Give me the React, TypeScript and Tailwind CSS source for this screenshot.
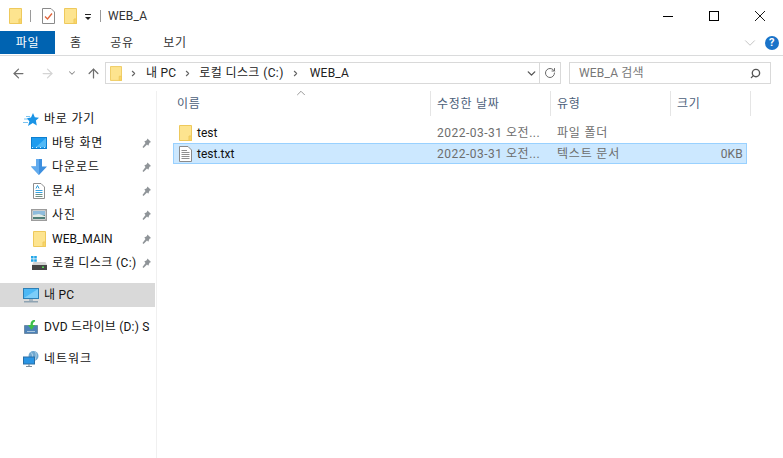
import { ChevronDown, ChevronUp, RotateCw, Search, ArrowLeft, ArrowRight, ArrowUp } from 'lucide-react'

function Folder({ w = 13, h = 16 }: { w?: number; h?: number }) {
  return (
    <svg width={w} height={h} viewBox="0 0 13 16" className="shrink-0">
      <path d="M0.5 0.5H12.5V15.5H0.5Z" fill="#fde48f" stroke="#eec95c" />
      <path d="M10 11H12.5V15.5H10Z" fill="#fbd667" stroke="#eec95c" />
    </svg>
  )
}

function ChecklistDoc() {
  return (
    <svg width="13" height="16" viewBox="0 0 13 16" className="shrink-0">
      <path d="M0.5 0.5H9L12.5 4V15.5H0.5Z" fill="#fff" stroke="#8a8a8a" />
      <path d="M3 8.5L5.5 11L10 5.5" fill="none" stroke="#e0633a" strokeWidth="1.3" />
    </svg>
  )
}

function TextDoc() {
  return (
    <svg width="13" height="16" viewBox="0 0 13 16" className="shrink-0">
      <path d="M0.5 0.5H9L12.5 4V15.5H0.5Z" fill="#fff" stroke="#8a8a8a" />
      <path d="M2.5 4.5H8M2.5 6.5H10.5M2.5 8.5H10.5M2.5 10.5H10.5M2.5 12.5H10.5" stroke="#8f8f8f" />
    </svg>
  )
}

function QuickStar() {
  return (
    <svg width="16" height="13" viewBox="0 0 16 13" className="shrink-0">
      <path d="M10 0L11.8 4.2L16 4.7L12.9 7.6L13.8 12.4L9.8 10L5 13L6.4 8.3L3.6 5.2L8 4.4Z" fill="#1a94e6" />
      <path d="M1 6H5M3 3.5H7M0 9.5H5" stroke="#7cc3f0" />
    </svg>
  )
}

function Desktop() {
  return (
    <svg width="16" height="12" viewBox="0 0 16 12" className="shrink-0">
      <rect x="0.5" y="0.5" width="15" height="11" fill="#1e9cef" stroke="#0d7fd0" />
      <path d="M5 10L15 1V10Z" fill="#52b9f6" />
      <path d="M1 10.5H15" stroke="#d4eefc" strokeDasharray="1 3" />
    </svg>
  )
}

function Download() {
  return (
    <svg width="16" height="16" viewBox="0 0 16 16" className="shrink-0">
      <path d="M5 0H11V7.5H16L8 16L0 7.5H5Z" fill="#3d8fdf" />
      <path d="M5 0H8V16L0 7.5H5Z" fill="#62abee" />
    </svg>
  )
}

function Documents() {
  return (
    <svg width="12" height="16" viewBox="0 0 12 16" className="shrink-0">
      <path d="M0.5 0.5H8L11.5 4V15.5H0.5Z" fill="#fff" stroke="#8f8f8f" />
      <path d="M3 5.5L4.5 2.5L6 5.5" fill="none" stroke="#2d9ad8" />
      <path d="M2.5 7.5H9.5M2.5 9.5H9.5" stroke="#35a3e0" />
      <path d="M2.5 11.5H9.5M2.5 13.5H9.5" stroke="#6f8f84" />
    </svg>
  )
}

function Pictures() {
  return (
    <svg width="16" height="12" viewBox="0 0 16 12" className="shrink-0">
      <rect x="0.75" y="0.75" width="14.5" height="10.5" fill="#fff" stroke="#9c9c9c" strokeWidth="1.5" />
      <rect x="2" y="2" width="12" height="4" fill="#8fbcdc" />
      <rect x="2" y="6" width="12" height="4" fill="#4f7f78" />
      <path d="M2 6L8 5L14 7V8H2Z" fill="#e2ebe6" />
    </svg>
  )
}

function LocalDisk() {
  return (
    <svg width="16" height="14" viewBox="0 0 16 14" className="shrink-0">
      <path d="M0 0H2.6V2.6H0ZM3.2 0H5.8V2.6H3.2ZM0 3.2H2.6V5.8H0ZM3.2 3.2H5.8V5.8H3.2Z" fill="#23a6e8" />
      <path d="M2.5 6H14.5L16 9H1Z" fill="#d3d3d3" />
      <rect x="1" y="9" width="15" height="5" fill="#444" />
      <rect x="11" y="10.5" width="2" height="1.5" fill="#57d957" />
    </svg>
  )
}

function Computer() {
  return (
    <svg width="16" height="15" viewBox="0 0 16 15" className="shrink-0">
      <rect x="0.5" y="0.5" width="15" height="10" fill="#4db8f5" stroke="#2d7fb5" />
      <path d="M1 10L15 1V10Z" fill="#7ccdf9" />
      <rect x="6" y="11" width="4" height="2" fill="#a5b5c1" />
      <rect x="1" y="13" width="14" height="1.5" fill="#8fa3b2" />
    </svg>
  )
}

function DvdDrive() {
  return (
    <svg width="14" height="14" viewBox="0 0 14 14" className="shrink-0">
      <path d="M0.5 5.5H13.5V13.5H0.5Z" fill="#4d82b8" stroke="#6f8ca6" />
      <path d="M3 11.5H11" stroke="#a9c7de" />
      <path d="M11 0C7.5 0 6.5 2 6.5 5H4L7.5 10L11 5H8.8C8.8 3 9.5 2 11 1.5Z" fill="#3cbf48" />
    </svg>
  )
}

function Network() {
  return (
    <svg width="16" height="16" viewBox="0 0 16 16" className="shrink-0">
      <circle cx="10.5" cy="5" r="5" fill="#6fa8d0" />
      <path d="M8 1.5C10 3 10 6 8.5 9M12 0.5C14 3 13 6 12 9" fill="none" stroke="#d7e8f4" strokeWidth="0.7" />
      <rect x="0.5" y="6" width="11" height="7" fill="#2a95e4" stroke="#2a6ea5" />
      <path d="M3 15.5H9M6 13V15" stroke="#7e8e9a" strokeWidth="1.2" />
    </svg>
  )
}

function Pin() {
  return (
    <svg width="11" height="11" viewBox="0 0 10 11" className="shrink-0">
      <path d="M6 0.5L9.5 4L8 4.8L6.8 7.8L5.5 6.5L2 10L1 9L4 5L2.8 3.5L5.2 2.2Z" fill="#8f9498" />
    </svg>
  )
}

function NavItem({ icon, label, pinned, active, indent, track = 'tracking-[0.8px]' }: { icon: React.ReactNode; label: string; pinned?: boolean; active?: boolean; indent?: boolean; track?: string }) {
  return (
    <div className={`flex h-6 items-center overflow-hidden whitespace-nowrap ${active ? 'bg-[#d9d9d9]' : ''} ${indent ? 'pl-[31px]' : 'pl-[23px]'}`}>
      <div className="mr-[5px] flex w-[16px] shrink-0 justify-center">{icon}</div>
      <span className={`min-w-0 flex-1 overflow-hidden text-[#111] ${track}`}>{label}</span>
      {pinned && (
        <div className="mx-[3px] shrink-0">
          <Pin />
        </div>
      )}
    </div>
  )
}

function FileRow({ icon, name, type, size, selected }: { icon: React.ReactNode; name: string; type: string; size?: string; selected?: boolean }) {
  return (
    <div className={`flex h-[21px] items-center border ${selected ? 'border-[#99d1ff] bg-[#cce8ff]' : 'border-transparent'}`}>
      <div className="flex w-[256px] items-center gap-[5px] pl-[5px] tracking-normal text-[#111]">
        {icon}
        <span>{name}</span>
      </div>
      <div className="w-[120px] pl-[7px] tracking-[0.5px] text-[#6d6d6d]">2022-03-31 오전...</div>
      <div className="w-[113px] pl-[7px] tracking-[0.8px] text-[#6d6d6d]">{type}</div>
      <div className="flex-1 pr-[3px] text-right text-[#6d6d6d]">{size}</div>
    </div>
  )
}

function ColumnHead({ label, width, first }: { label: string; width: string; first?: boolean }) {
  return (
    <div className={`flex h-[25px] items-center border-r border-[#e5e5e5] pt-[1px] tracking-[0.7px] text-[#4c607a] ${first ? 'pl-[4px]' : 'pl-[6px]'} ${width}`}>{label}</div>
  )
}

function Crumb() {
  return <ChevronDown size={9} strokeWidth={3} className="-rotate-90 text-[#666]" />
}

export default function App() {
  return (
    <div className="flex h-[458px] w-[783px] flex-col overflow-hidden bg-white text-[12px] tracking-[0.2px] font-['Roboto','Noto_Sans_CJK_KR',sans-serif]">
      {/* title bar */}
      <div className="flex h-[31px] shrink-0 items-center pl-[9px]">
        <Folder />
        <div className="ml-[8px] h-[12px] w-px bg-[#9a9a9a]" />
        <div className="ml-[11px]"><ChecklistDoc /></div>
        <div className="ml-[9px]"><Folder /></div>
        <div className="ml-[8px] flex flex-col items-center gap-[2px] pt-[2px]">
          <div className="h-px w-[6px] bg-[#222]" />
          <div className="h-0 w-0 border-x-[3px] border-t-[3px] border-x-transparent border-t-[#222]" />
        </div>
        <div className="ml-[9px] h-[12px] w-px bg-[#9a9a9a]" />
        <span className="ml-[7px] text-[#333]">WEB_A</span>
        <div className="ml-auto flex items-center">
          <div className="flex w-[46px] justify-center">
            <svg width="10" height="10" viewBox="0 0 10 10"><path d="M0 5.5H10" stroke="#000" /></svg>
          </div>
          <div className="flex w-[46px] justify-center">
            <svg width="10" height="10" viewBox="0 0 10 10"><rect x="0.5" y="0.5" width="9" height="9" fill="none" stroke="#000" /></svg>
          </div>
          <div className="flex w-[46px] justify-center">
            <svg width="10" height="10" viewBox="0 0 10 10"><path d="M0 0L10 10M10 0L0 10" stroke="#000" strokeWidth="0.9" /></svg>
          </div>
        </div>
      </div>

      {/* ribbon tabs */}
      <div className="flex h-[25px] shrink-0 items-start border-b border-[#dadbdc] tracking-[0.7px]">
        <div className="flex h-[23px] w-[55px] items-center justify-center bg-[#0063b1] text-white">파일</div>
        <div className="flex h-[23px] items-center text-[#333]">
          <span className="ml-[15px] w-[10px] text-center">홈</span>
          <span className="ml-[30px] w-[24px] text-center">공유</span>
          <span className="ml-[29px] w-[24px] text-center">보기</span>
        </div>
        <div className="ml-auto flex h-[23px] items-center pr-[4px]">
          <ChevronDown size={18} strokeWidth={1} className="mr-[6px] text-[#b0b0b0]" />
          <div className="flex h-[14px] w-[14px] items-center justify-center rounded-full bg-[#1a73c9] text-[11px] font-bold leading-none text-white">?</div>
        </div>
      </div>

      {/* address bar */}
      <div className="flex h-[35px] shrink-0 items-center pb-[1px] pl-[11px] pr-[12px]">
        <ArrowLeft size={15} strokeWidth={2} className="text-[#6e6e6e]" />
        <ArrowRight size={15} strokeWidth={2} className="ml-[14px] text-[#d4d4d4]" />
        <ChevronDown size={10} strokeWidth={2.5} className="ml-[12px] text-[#8a8a8a]" />
        <ArrowUp size={15} strokeWidth={2} className="ml-[9px] text-[#6e6e6e]" />
        <div className="ml-[4px] flex h-[22px] w-[456px] items-center border border-[#d9d9d9] pl-[4px] text-[#222]">
          <Folder w={12} h={15} />
          <div className="ml-[7px]"><Crumb /></div>
          <span className="ml-[8px]">내 PC</span>
          <div className="ml-[7px]"><Crumb /></div>
          <span className="ml-[7px] tracking-[0.4px]">로컬 디스크 (C:)</span>
          <div className="ml-[7px]"><Crumb /></div>
          <span className="ml-[10px]">WEB_A</span>
          <div className="ml-auto flex h-full items-center">
            <ChevronDown size={13} strokeWidth={2.5} className="text-[#555]" />
            <div className="ml-[1px] flex h-full w-[21px] items-center justify-center border-l border-[#d9d9d9]">
              <RotateCw size={12} strokeWidth={2} className="text-[#6a6a6a]" />
            </div>
          </div>
        </div>
        <div className="ml-[8px] flex h-[22px] flex-1 items-center justify-between border border-[#d9d9d9] pl-[9px] pr-[9px] text-[#777]">
          <span>WEB_A 검색</span>
          <Search size={11} strokeWidth={3} className="-scale-x-100 text-[#555]" />
        </div>
      </div>

      {/* body */}
      <div className="flex min-h-0 flex-1">
        <aside className="w-[157px] shrink-0 border-r border-[#f0f0f0] pr-px pt-[16px]">
          <NavItem icon={<QuickStar />} label="바로 가기" />
          <NavItem indent icon={<Desktop />} label="바탕 화면" pinned />
          <NavItem indent icon={<Download />} label="다운로드" pinned track="tracking-[1px]" />
          <NavItem indent icon={<Documents />} label="문서" pinned track="tracking-[1px]" />
          <NavItem indent icon={<Pictures />} label="사진" pinned track="tracking-[1px]" />
          <NavItem indent icon={<Folder />} label="WEB_MAIN" pinned track="tracking-normal" />
          <NavItem indent icon={<LocalDisk />} label="로컬 디스크 (C:)" pinned track="tracking-[0.4px]" />
          <div className="mt-[8px]"><NavItem active icon={<Computer />} label="내 PC" track="tracking-[0.2px]" /></div>
          <div className="mt-[8px]"><NavItem icon={<DvdDrive />} label="DVD 드라이브 (D:) S" track="tracking-[0.2px]" /></div>
          <div className="mt-[8px]"><NavItem icon={<Network />} label="네트워크" track="tracking-[1px]" /></div>
        </aside>

        <main className="relative min-w-0 flex-1 pl-[16px]">
          <ChevronUp size={14} strokeWidth={1.3} className="absolute left-[137px] -top-[5px] text-[#7a7a7a]" />
          <div className="flex">
            <ColumnHead first label="이름" width="w-[258px]" />
            <ColumnHead label="수정한 날짜" width="w-[120px]" />
            <ColumnHead label="유형" width="w-[120px]" />
            <ColumnHead label="크기" width="w-[80px]" />
          </div>
          <div className="w-[574px] pt-[6px]">
            <FileRow icon={<Folder />} name="test" type="파일 폴더" />
            <FileRow icon={<TextDoc />} name="test.txt" type="텍스트 문서" size="0KB" selected />
          </div>
        </main>
      </div>
    </div>
  )
}
